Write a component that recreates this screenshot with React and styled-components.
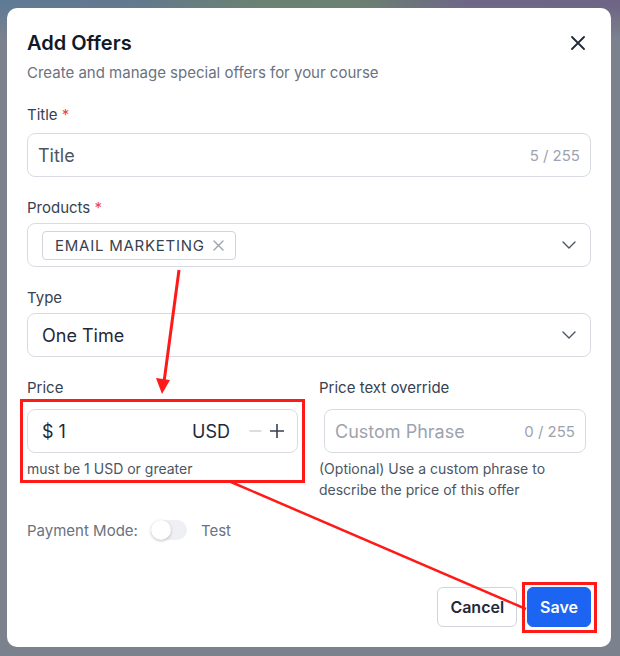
import React from "react"
import styled, { createGlobalStyle } from "styled-components"

const Global = createGlobalStyle`
  html, body {
    margin: 0;
    padding: 0;
  }
  body {
    font-family: Inter, "Noto Sans", sans-serif;
    -webkit-font-smoothing: antialiased;
  }
  * {
    box-sizing: border-box;
  }
`

const CloseIcon = () => (
  <svg width="14" height="14" viewBox="0 0 14 14" fill="none">
    <path d="M1 1L13 13M13 1L1 13" stroke="#1f2937" strokeWidth="1.8" strokeLinecap="round" />
  </svg>
)

const Chevron = () => (
  <svg width="14" height="8" viewBox="0 0 14 8" fill="none">
    <path d="M1 1L7 7L13 1" stroke="#4b5563" strokeWidth="1.4" strokeLinecap="round" strokeLinejoin="round" />
  </svg>
)

const SmallX = () => (
  <svg width="11" height="11" viewBox="0 0 11 11" fill="none">
    <path d="M1 1L10 10M10 1L1 10" stroke="#9ca3af" strokeWidth="1.4" strokeLinecap="round" />
  </svg>
)

const Minus = () => (
  <svg width="13" height="14" viewBox="0 0 13 14" fill="none">
    <path d="M0.5 7H12.5" stroke="#d1d5db" strokeWidth="1.6" />
  </svg>
)

const Plus = () => (
  <svg width="14" height="14" viewBox="0 0 14 14" fill="none">
    <path d="M0 7H14M7 0V14" stroke="#374151" strokeWidth="1.6" />
  </svg>
)

const Annotations = () => (
  <Overlay width="620" height="656" viewBox="0 0 620 656">
    <rect x="21.5" y="400.5" width="282" height="81" fill="none" stroke="#ff1a1a" strokeWidth="3" />
    <line x1="179" y1="270" x2="164" y2="382" stroke="#ff1a1a" strokeWidth="3" />
    <polygon points="156,378 170,380 162,394" fill="#ff1a1a" />
    <line x1="231" y1="482" x2="526" y2="609" stroke="#ff1a1a" strokeWidth="2.5" />
    <rect x="523.5" y="583.5" width="72" height="48" fill="none" stroke="#ff1a1a" strokeWidth="3" />
  </Overlay>
)

const App = () => {
  return (
    <Page>
      <Global />
      <Modal>
        <Header>
          <h2>Add Offers</h2>
          <CloseBtn>
            <CloseIcon />
          </CloseBtn>
        </Header>
        <Subtitle>Create and manage special offers for your course</Subtitle>

        <Form>
          <Field>
            <Label $gap={8}>
              Title <Req>*</Req>
            </Label>
            <Input>
              <Value>Title</Value>
              <Counter>5 / 255</Counter>
            </Input>
          </Field>

          <Field>
            <Label $gap={5}>
              Products <Req>*</Req>
            </Label>
            <Input $left="14px">
              <Chip>
                EMAIL MARKETING
                <SmallX />
              </Chip>
              <Spacer />
              <Chevron />
            </Input>
          </Field>

          <Field>
            <Label $gap={5}>Type</Label>
            <Input $left="14px">
              <Value $dark>One Time</Value>
              <Spacer />
              <Chevron />
            </Input>
          </Field>

          <PriceRow>
            <Field>
              <Label $gap={11}>Price</Label>
              <Input $left="14px" $right="13px">
                <Value $dark>$ 1</Value>
                <Spacer />
                <Value $dark>USD</Value>
                <Stepper>
                  <Minus />
                  <Plus />
                </Stepper>
              </Input>
              <Help>must be 1 USD or greater</Help>
            </Field>
            <Field>
              <Label $gap={11}>Price text override</Label>
              <Input $inset>
                <Value $muted>Custom Phrase</Value>
                <Spacer />
                <Counter>0 / 255</Counter>
              </Input>
              <Help>
                (Optional) Use a custom phrase to
                <br />
                describe the price of this offer
              </Help>
            </Field>
          </PriceRow>

          <ModeRow>
            <span>Payment Mode:</span>
            <Toggle />
            <span>Test</span>
          </ModeRow>
        </Form>

        <Footer>
          <Button>Cancel</Button>
          <Button $primary>Save</Button>
        </Footer>
      </Modal>
      <Annotations />
    </Page>
  )
}

export default App

const Page = styled.div`
  position: relative;
  width: 620px;
  height: 656px;
  padding: 8px 9px 9px 7px;
  background: linear-gradient(
      180deg,
      rgba(124, 131, 142, 0) 0px,
      rgba(124, 131, 142, 0) 4px,
      #7b828d 40px
    ),
    linear-gradient(90deg, #5f7a96 0%, #62798e 22%, #6a8272 42%, #6b8070 58%, #6f6687 75%, #6e6485 100%);
  background-color: #7b828d;
  overflow: hidden;
`

const Modal = styled.div`
  width: 604px;
  height: 639px;
  background: #fff;
  border-radius: 10px;
  padding: 21px 20px 20px 20px;
  display: flex;
  flex-direction: column;
`

const Header = styled.div`
  display: flex;
  align-items: center;
  justify-content: space-between;
  h2 {
    margin: 0;
    font-size: 20px;
    line-height: 28px;
    font-weight: 600;
    color: #111827;
  }
`

const CloseBtn = styled.button`
  border: none;
  background: none;
  padding: 0;
  margin-right: 6px;
  display: flex;
`

const Subtitle = styled.p`
  margin: 6px 0 0;
  font-size: 15px;
  line-height: 20px;
  color: #6b7280;
`

const Form = styled.div`
  display: flex;
  flex-direction: column;
  gap: 21px;
  margin-top: 22px;
`

const Field = styled.div`
  display: flex;
  flex-direction: column;
  min-width: 0;
`

const Label = styled.label`
  font-size: 15px;
  line-height: 20px;
  color: #374151;
  margin-bottom: ${(p) => p.$gap}px;
`

const Req = styled.span`
  color: #ef4444;
`

const Input = styled.div`
  height: 44px;
  border: 1px solid #d8dce2;
  border-radius: 8px;
  display: flex;
  align-items: center;
  padding: 0 ${(p) => p.$right || (p.$left ? "14px" : "10px")} 0 ${(p) => p.$left || "10px"};
  margin: 0 ${(p) => (p.$inset ? "5px" : "0")};
`

const Value = styled.span`
  font-size: 18px;
  color: ${(p) => (p.$muted ? "#9ca3af" : p.$dark ? "#1f2937" : "#4b5563")};
  white-space: nowrap;
`

const Counter = styled.span`
  margin-left: auto;
  font-size: 15px;
  color: #9ca3af;
`

const Spacer = styled.span`
  flex: 1;
`

const Chip = styled.span`
  display: inline-flex;
  align-items: center;
  gap: 8px;
  height: 29px;
  padding: 0 11px 0 12px;
  border: 1px solid #d1d5db;
  border-radius: 4px;
  font-size: 15px;
  letter-spacing: 0.75px;
  color: #374151;
`

const Stepper = styled.span`
  display: flex;
  align-items: center;
  gap: 8px;
  margin-left: 19px;
`

const PriceRow = styled.div`
  display: grid;
  grid-template-columns: 271px 1fr;
  column-gap: 21px;
`

const Help = styled.div`
  margin-top: 5px;
  font-size: 14px;
  line-height: 21px;
  color: #4b5563;
`

const ModeRow = styled.div`
  display: flex;
  align-items: center;
  gap: 12px;
  font-size: 15px;
  color: #6b7280;
  margin-top: -1px;
`

const Toggle = styled.span`
  position: relative;
  width: 36px;
  height: 20px;
  border-radius: 10px;
  background: #eef0f3;
  margin-left: 1px;
  margin-right: 2px;
  &::after {
    content: "";
    position: absolute;
    left: 0;
    top: 0;
    width: 20px;
    height: 20px;
    border-radius: 50%;
    background: #fff;
    box-shadow: 0 1px 3px rgba(0, 0, 0, 0.25);
  }
`

const Footer = styled.div`
  margin-top: auto;
  display: flex;
  justify-content: flex-end;
  gap: 10px;
`

const Button = styled.button`
  height: 40px;
  padding: 0 ${(p) => (p.$primary ? "12px" : "12px")};
  border-radius: 6px;
  font-family: Inter, sans-serif;
  font-size: 16px;
  font-weight: 600;
  border: 1px solid ${(p) => (p.$primary ? "#1c64f2" : "#d1d5db")};
  background: ${(p) => (p.$primary ? "#1c64f2" : "#fff")};
  color: ${(p) => (p.$primary ? "#fff" : "#1f2937")};
`

const Overlay = styled.svg`
  position: absolute;
  left: 0;
  top: 0;
  pointer-events: none;
`
